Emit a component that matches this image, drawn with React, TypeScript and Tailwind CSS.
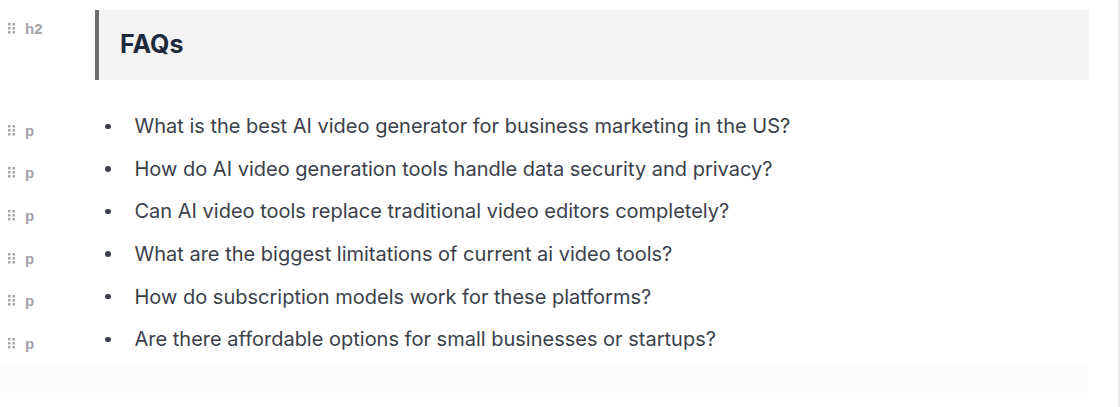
const questions = [
  "What is the best AI video generator for business marketing in the US?",
  "How do AI video generation tools handle data security and privacy?",
  "Can AI video tools replace traditional video editors completely?",
  "What are the biggest limitations of current ai video tools?",
  "How do subscription models work for these platforms?",
  "Are there affordable options for small businesses or startups?",
];

function DragDots() {
  return (
    <svg width="8" height="11" viewBox="0 0 8 11" className="shrink-0">
      {[0, 1, 2].map((r) =>
        [0, 1].map((c) => (
          <rect key={`${r}-${c}`} x={c * 4.5} y={r * 4} width="2.5" height="2.5" rx="0.5" fill="#a3a3a3" />
        ))
      )}
    </svg>
  );
}

function BlockLabel({ tag }: { tag: string }) {
  return (
    <div className="flex items-center gap-[9px] pl-[8px] text-[15px] leading-[15px] font-bold text-[#a3a3a8]" style={{ fontFamily: '"Liberation Sans", Arial, sans-serif' }}>
      <DragDots />
      <span>{tag}</span>
    </div>
  );
}

export default function App() {
  return (
    <div className="w-[1120px] h-[407px] bg-white border-r-2 border-[#ebebeb] overflow-hidden" style={{ fontFamily: 'Inter, "Noto Sans", sans-serif' }}>
      <div className="flex pt-[10px]">
        <div className="w-[95px] shrink-0 pt-[11px]">
          <BlockLabel tag="h2" />
        </div>
        <div className="w-[994px] h-[70px] bg-[#f4f4f5] border-l-4 border-[#6b6b70] flex items-center pl-[21px]">
          <h2 className="text-[25px] font-bold text-[#1e293b]">FAQs</h2>
        </div>
      </div>

      <ul className="mt-[25px]">
        {questions.map((q) => (
          <li key={q} className="flex items-center h-[42.6px]">
            <div className="w-[95px] shrink-0 pt-[8px]">
              <BlockLabel tag="p" />
            </div>
            <div className="flex items-center text-[20px] leading-[28px] text-[#3a3f4b]">
              <span className="w-[5.5px] h-[5.5px] rounded-full bg-[#3a3f4b] ml-[10px] mr-[24px]" />
              <span>{q}</span>
            </div>
          </li>
        ))}
      </ul>

      <div className="mt-[5px] w-[1088px] h-[27px] bg-[#fcfcfc]" />
    </div>
  );
}
